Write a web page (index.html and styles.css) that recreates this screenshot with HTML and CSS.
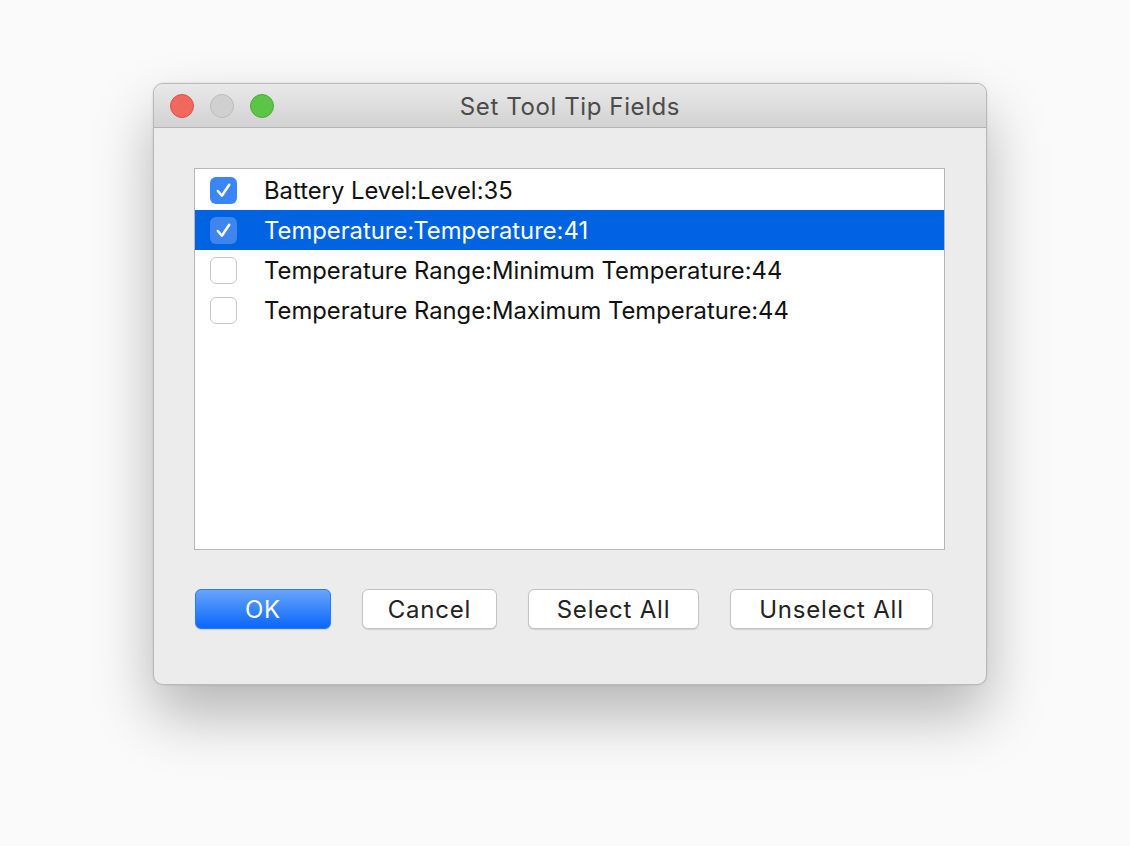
FILE: index.html
```html
<!DOCTYPE html>
<html>
<head>
<meta charset="utf-8">
<link rel="stylesheet" href="styles.css">
</head>
<body>
<div class="window">
  <div class="titlebar">
    <div class="lights">
      <span class="light red"></span>
      <span class="light gray"></span>
      <span class="light green"></span>
    </div>
    <div class="title">Set Tool Tip Fields</div>
  </div>
  <div class="content">
    <div class="list">
      <div class="row">
        <span class="cb checked"><svg viewBox="0 0 26 26"><path d="M7.5 13.5 L11.5 18 L18.5 7.5" fill="none" stroke="#fff" stroke-width="2.4" stroke-linecap="round" stroke-linejoin="round"/></svg></span>
        <span class="label">Battery Level:Level:35</span>
      </div>
      <div class="row selected">
        <span class="cb checked"><svg viewBox="0 0 26 26"><path d="M7.5 13.5 L11.5 18 L18.5 7.5" fill="none" stroke="#fff" stroke-width="2.4" stroke-linecap="round" stroke-linejoin="round"/></svg></span>
        <span class="label">Temperature:Temperature:41</span>
      </div>
      <div class="row">
        <span class="cb"></span>
        <span class="label">Temperature Range:Minimum Temperature:44</span>
      </div>
      <div class="row">
        <span class="cb"></span>
        <span class="label">Temperature Range:Maximum Temperature:44</span>
      </div>
    </div>
    <div class="buttons">
      <button class="btn primary ok">OK</button>
      <button class="btn cancel">Cancel</button>
      <button class="btn selall">Select All</button>
      <button class="btn unsel">Unselect All</button>
    </div>
  </div>
</div>
</body>
</html>
```

FILE: styles.css
```css
html, body {
  margin: 0;
  padding: 0;
  background: #fafafa;
  width: 1130px;
  height: 846px;
  overflow: hidden;
}
body {
  padding: 83px 0 0 153px;
  box-sizing: border-box;
  font-family: Inter, "Helvetica Neue", "Liberation Sans", sans-serif;
}
.window {
  width: 834px;
  height: 602px;
  box-sizing: border-box;
  border: 1px solid #b9b9b9;
  border-radius: 10px;
  background: #ececec;
  overflow: hidden;
  box-shadow: 0 30px 60px rgba(0,0,0,0.28), 0 0 2px rgba(0,0,0,0.15);
  display: flex;
  flex-direction: column;
}
.titlebar {
  height: 44px;
  flex: none;
  box-sizing: border-box;
  background: linear-gradient(#e9e9e9, #d2d2d2);
  border-bottom: 1px solid #b3b3b3;
  display: flex;
  align-items: center;
  position: relative;
}
.lights {
  display: flex;
  gap: 16px;
  padding-left: 16px;
  position: relative;
  z-index: 1;
}
.light {
  width: 24px;
  height: 24px;
  border-radius: 50%;
  box-sizing: border-box;
}
.red { background: #f1685e; border: 1px solid #dd5147; }
.gray { background: #d0d0d0; border: 1px solid #bdbdbd; }
.green { background: #5cc447; border: 1px solid #4aae35; }
.title {
  position: absolute;
  left: 0;
  right: 0;
  top: 0;
  bottom: 0;
  display: flex;
  align-items: center;
  justify-content: center;
  font-size: 24px;
  letter-spacing: 0.6px;
  color: #4b4b4b;
  padding-top: 2px;
}
.content {
  padding: 40px 0 0 40px;
}
.list {
  width: 751px;
  height: 382px;
  box-sizing: border-box;
  background: #fff;
  border: 1px solid #b6b6b6;
  padding-top: 1px;
}
.row {
  height: 40px;
  display: flex;
  align-items: center;
  color: #111;
  font-size: 23.8px;
}
.row.selected {
  background: #0063e1;
  color: #fff;
}
.cb {
  width: 27px;
  height: 27px;
  box-sizing: border-box;
  margin-left: 15px;
  margin-right: 27px;
  border-radius: 6px;
  border: 1px solid #c7c7c7;
  background: #fff;
  display: flex;
  flex: none;
}
.cb.checked {
  background: #3b86f6;
  border: none;
}
.selected .cb.checked {
  background: #3e86ee;
}
.cb svg { width: 27px; height: 27px; }
.label { padding-top: 1px; }
.buttons {
  display: flex;
  margin-top: 39px;
  padding-left: 1px;
}
.btn {
  height: 40px;
  box-sizing: border-box;
  border-radius: 6px;
  border: 1px solid #c4c4c4;
  background: #fff;
  box-shadow: 0 1px 1px rgba(0,0,0,0.12);
  font-family: Inter, "Helvetica Neue", "Liberation Sans", sans-serif;
  font-size: 24px;
  letter-spacing: 0.8px;
  color: #222;
  padding: 1px 0 0;
  margin-right: 31px;
}
.btn.primary {
  background: linear-gradient(#68a4fb, #0a67fb);
  border: 1px solid #2d78ee;
  color: #fff;
}
.ok { width: 136px; }
.cancel { width: 135px; }
.selall { width: 171px; margin-right: 31px; }
.unsel { width: 203px; }
```
